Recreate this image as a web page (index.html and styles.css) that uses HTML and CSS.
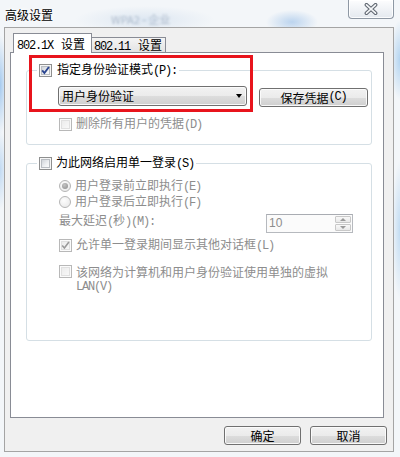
FILE: index.html
```html
<!DOCTYPE html>
<html lang="zh-CN">
<head>
<meta charset="utf-8">
<title>高级设置</title>
<link rel="stylesheet" href="styles.css">
</head>
<body>
<div class="win">
  <div class="titlebar">
    <span class="title">高级设置</span>
    <span class="ghost">WPA2 - 企业</span>
    <span class="close">
      <svg width="14" height="12" viewBox="0 0 14 12">
        <path d="M2.5 1.8 L11.5 10.2 M11.5 1.8 L2.5 10.2" stroke="#5f6670" stroke-width="3.8" stroke-linecap="round" fill="none"/>
        <path d="M2.5 1.8 L11.5 10.2 M11.5 1.8 L2.5 10.2" stroke="#f4f6f8" stroke-width="1.7" stroke-linecap="round" fill="none"/>
      </svg>
    </span>
  </div>
  <div class="client">
    <div class="tabs">
      <div class="tab active"><span class="l">802.1X </span>设置</div>
      <div class="tab"><span class="l">802.11 </span>设置</div>
    </div>
    <div class="panel">
      <div class="group g1">
        <div class="legend">
          <span class="cb"><svg width="13" height="13" viewBox="0 0 13 13"><path d="M3.2 6.4 L5.4 9 L9.9 3" fill="none" stroke="#2b4590" stroke-width="1.9"/></svg></span>
          <span class="txt">指定身份验证模式<span class="l">(P):</span></span>
        </div>
        <div class="row mode">
          <div class="combo"><span class="txt">用户身份验证</span><span class="arrow"></span></div>
          <div class="btn save">保存凭据<span class="l">(C)</span></div>
        </div>
        <div class="row opt dis del">
          <span class="cb off"></span>
          <span class="txt">删除所有用户的凭据<span class="l">(D)</span></span>
        </div>
      </div>
      <div class="group g2">
        <div class="legend">
          <span class="cb"></span>
          <span class="txt">为此网络启用单一登录<span class="l">(S)</span></span>
        </div>
        <div class="row opt dis r1">
          <span class="radio on"></span>
          <span class="txt">用户登录前立即执行<span class="l">(E)</span></span>
        </div>
        <div class="row opt dis">
          <span class="radio"></span>
          <span class="txt">用户登录后立即执行<span class="l">(F)</span></span>
        </div>
        <div class="row delay dis">
          <span class="txt">最大延迟<span class="l">(</span>秒<span class="l">)(M):</span></span>
          <div class="spin">
            <span class="val">10</span>
            <span class="arrows"><span class="sb"><i class="up"></i></span><span class="sb"><i class="down"></i></span></span>
          </div>
        </div>
        <div class="row opt dis r-l">
          <span class="cb off"><svg width="13" height="13" viewBox="0 0 13 13"><path d="M3.2 6.4 L5.4 9 L9.9 3" fill="none" stroke="#9a9a9a" stroke-width="1.6"/></svg></span>
          <span class="txt">允许单一登录期间显示其他对话框<span class="l">(L)</span></span>
        </div>
        <div class="row opt dis r-v">
          <span class="cb off"></span>
          <span class="txt">该网络为计算机和用户身份验证使用单独的虚拟<br><span class="l">LAN(V)</span></span>
        </div>
      </div>
      <div class="redmark"></div>
    </div>
    <div class="footer">
      <div class="btn">确定</div>
      <div class="btn">取消</div>
    </div>
  </div>
</div>
</body>
</html>
```

FILE: styles.css
```css
* { box-sizing: border-box; }
html, body { margin: 0; padding: 0; }
body {
  width: 400px;
  height: 457px;
  overflow: hidden;
  font-family: "Noto Sans CJK SC", "Noto Sans", sans-serif;
  font-size: 12px;
  color: #141414;
}
.l {
  font-family: "Liberation Mono", monospace;
  font-size: 12px;
  letter-spacing: -1.2px;
}
.win {
  width: 400px;
  height: 457px;
  display: flex;
  flex-direction: column;
  background:
    radial-gradient(ellipse 26px 12px at 292px 22px, rgba(120,170,225,.45), rgba(120,170,225,0)),
    radial-gradient(ellipse 70px 14px at 145px 20px, rgba(140,175,215,.22), rgba(140,175,215,0)),
    radial-gradient(ellipse 8px 50px at 0px 85px, rgba(100,165,230,.55), rgba(100,165,230,0)),
    radial-gradient(ellipse 8px 40px at 0px 170px, rgba(100,165,230,.35), rgba(100,165,230,0)),
    radial-gradient(ellipse 10px 40px at 400px 60px, rgba(100,170,230,.45), rgba(100,170,230,0)),
    radial-gradient(ellipse 8px 70px at 400px 230px, rgba(100,170,230,.35), rgba(100,170,230,0)),
    #f3f6f9;
}
.titlebar {
  height: 27px;
  flex: none;
  display: flex;
  align-items: flex-start;
}
.title {
  margin: 6px 0 0 5px;
  line-height: 17px;
  color: #000;
  text-shadow: 0 0 4px #fff, 0 0 8px #fff;
}
.ghost {
  margin: 12px 0 0 58px;
  line-height: 14px;
  font-size: 11px;
  color: rgba(70, 95, 130, .35);
  filter: blur(1.3px);
}
.close {
  margin: 0 6px 0 auto;
  width: 46px;
  height: 19px;
  border: 1px solid #8e98a4;
  border-top: none;
  border-radius: 0 0 4px 4px;
  background: linear-gradient(#fdfdfe, #e4e9ef);
  box-shadow: inset 0 0 0 1px rgba(255,255,255,.85);
  display: flex;
  align-items: center;
  justify-content: center;
}
.client {
  flex: none;
  margin-left: 4px;
  width: 390px;
  height: 425px;
  border: 1px solid #a4a4a4;
  background: #f0f0f0;
}
.tabs {
  display: flex;
  align-items: flex-end;
  height: 20px;
  margin: 5px 0 -1px 8px;
  position: relative;
  z-index: 1;
}
.tab {
  height: 16px;
  width: 75px;
  margin-left: -1px;
  padding-left: 2px;
  border: 1px solid #898c95;
  background: linear-gradient(#f4f4f4, #e3e3e3);
  line-height: 14px;
  white-space: nowrap;
  color: #000;
}
.tab.active {
  height: 20px;
  width: 79px;
  margin-left: 0;
  padding-left: 3px;
  border-bottom: none;
  background: #fff;
  line-height: 19px;
  position: relative;
  z-index: 2;
}
.tab .l { margin-right: 2px; }
.panel {
  margin-left: 5px;
  width: 374px;
  height: 366px;
  border: 1px solid #898c95;
  background: #fff;
  position: relative;
}
.group {
  margin-left: 15px;
  width: 346px;
  border: 1px solid #d5dfe5;
  border-radius: 3px;
}
.g1 { margin-top: 17px; height: 75px; }
.g2 { margin-top: 18px; height: 178px; }
.legend {
  display: flex;
  align-items: center;
  gap: 5px;
  width: max-content;
  height: 14px;
  margin: -8px 0 0 10px;
  padding: 0 2px;
  background: #fff;
  line-height: 14px;
  color: #000;
}
.g2 .legend { gap: 4px; }
.row { display: flex; }
.mode { margin: 9px 0 0 31px; align-items: flex-start; }
.combo {
  width: 189px;
  height: 20px;
  border: 1px solid #707070;
  border-radius: 3px;
  background: linear-gradient(#f2f2f2 0%, #ebebeb 50%, #dddddd 51%, #cfcfcf 100%);
  box-shadow: inset 0 0 0 1px rgba(252,252,252,.9);
  display: flex;
  align-items: center;
  justify-content: space-between;
  padding: 0 4px 0 3px;
  line-height: 18px;
  color: #000;
}
.arrow {
  width: 0;
  height: 0;
  border-left: 3.5px solid transparent;
  border-right: 3.5px solid transparent;
  border-top: 4px solid #000;
}
.btn {
  height: 19px;
  border: 1px solid #707070;
  border-radius: 3px;
  background: linear-gradient(#f2f2f2 0%, #ebebeb 50%, #dddddd 51%, #cfcfcf 100%);
  box-shadow: inset 0 0 0 1px rgba(252,252,252,.9);
  display: flex;
  align-items: center;
  justify-content: center;
  line-height: 17px;
  color: #000;
  white-space: nowrap;
}
.save { width: 109px; margin: 2px 0 0 12px; }
.opt {
  align-items: center;
  gap: 4px;
  margin-left: 32px;
  line-height: 16px;
  height: 16px;
}
.del { margin-top: 10px; height: 14px; line-height: 14px; }
.r1 { margin-top: 8px; }
.dis { color: #8d8d8d; }
.delay {
  margin: 2px 0 0 32px;
  padding-right: 18px;
  align-items: flex-start;
  line-height: 16px;
}
.spin {
  margin: 2px 0 0 auto;
  width: 87px;
  height: 19px;
  border: 1px solid #b6b9be;
  border-top-color: #a9acb2;
  background: #fbfbfb;
  display: flex;
}
.val {
  flex: 1;
  padding-left: 2px;
  font-family: "Liberation Sans", sans-serif;
  font-size: 12px;
  line-height: 17px;
  color: #8d8d8d;
}
.arrows {
  width: 17px;
  padding: 1px 1px 1px 0;
  display: flex;
  flex-direction: column;
  gap: 1px;
}
.sb {
  flex: 1;
  border: 1px solid #c8c8c8;
  border-radius: 1px;
  background: linear-gradient(#f8f8f8, #e8e8e8);
  display: flex;
  align-items: center;
  justify-content: center;
}
.up, .down {
  width: 0; height: 0;
  border-left: 3px solid transparent;
  border-right: 3px solid transparent;
}
.up { border-bottom: 3px solid #9a9a9a; }
.down { border-top: 3px solid #9a9a9a; }
.r-l { margin-top: 4px; }
.r-v {
  margin-top: 12px;
  height: auto;
  align-items: flex-start;
  line-height: 13px;
  white-space: nowrap;
}
.cb {
  flex: none;
  position: relative;
  width: 13px;
  height: 13px;
  border: 1px solid #8e8f8f;
  background: #f6f6f6;
}
.cb::before {
  content: "";
  position: absolute;
  inset: 1px;
  border: 1px solid #b9bdc2;
  background: linear-gradient(135deg, #d0d4d9 0%, #eef0f2 60%, #fafafa 100%);
}
.cb svg { position: absolute; left: -1px; top: -1px; z-index: 1; }
.cb.off { border-color: #b8b8b8; background: #fbfbfb; }
.cb.off::before { border-color: #e0e0e0; background: linear-gradient(135deg, #ececec, #f8f8f8); }
.radio {
  flex: none;
  position: relative;
  width: 12px;
  height: 12px;
  border: 1px solid #b5b5b5;
  border-radius: 50%;
  background: radial-gradient(circle at 40% 35%, #fdfdfd, #e6e6e6);
}
.radio.on::after {
  content: "";
  position: absolute;
  left: 2px; top: 2px;
  width: 6px; height: 6px;
  border-radius: 50%;
  background: radial-gradient(circle at 40% 35%, #c4c4c4, #8a8a8a);
}
.redmark {
  position: absolute;
  left: 18px;
  top: 2px;
  width: 224px;
  height: 57px;
  border: 3px solid #e8141c;
  pointer-events: none;
}
.footer {
  display: flex;
  justify-content: flex-end;
  gap: 9px;
  margin-top: 8px;
  padding-right: 6px;
}
.footer .btn { width: 77px; }
```
